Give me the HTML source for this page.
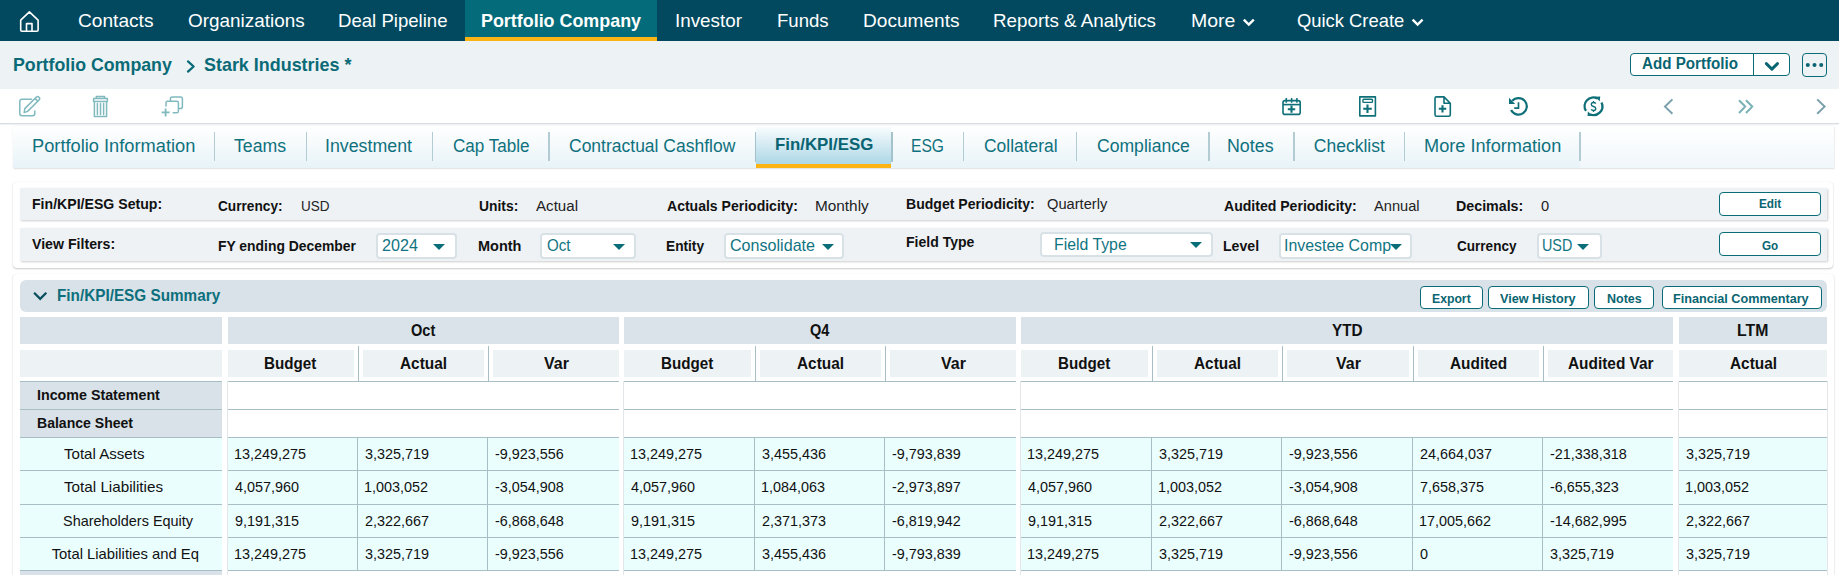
<!DOCTYPE html>
<html><head><meta charset="utf-8"><style>
*{box-sizing:border-box;margin:0;padding:0}
html,body{width:1839px;height:575px;overflow:hidden;background:#fff}
body{position:relative;font-family:"Liberation Sans",sans-serif;color:#111}
.a{position:absolute}
.t{position:absolute;white-space:nowrap;line-height:1;transform-origin:0 0}
.panel{position:absolute;background:#fff;border-radius:4px;box-shadow:0 1px 2px rgba(0,0,0,.2),0 0 1px rgba(0,0,0,.1)}
.row{position:absolute;background:#eef2f5;box-shadow:1px 1px 2px rgba(0,0,0,.2)}
.dd{position:absolute;background:#fff;border:2px solid #d8e2e6;border-radius:4px}
.car{position:absolute;width:0;height:0;border-left:6.5px solid transparent;border-right:6.5px solid transparent;border-top:6.8px solid #0a6e78}
.btn{position:absolute;background:#fff;border:1.4px solid #0b6c77;border-radius:4px}
</style></head><body>
<div class="a" style="left:0;top:0;width:1839px;height:41px;background:#02495f"></div>
<div class="a" style="left:465px;top:0;width:192px;height:41px;background:#036b79"></div>
<div class="a" style="left:465px;top:37px;width:192px;height:4px;background:#fbb414"></div>
<svg class="a" style="left:0;top:0" width="60" height="41" viewBox="0 0 60 41"><path d="M20.7 30 V20.2 L29.4 11.8 L38.1 20.2 V30 Q38.1 31.2 36.9 31.2 H21.9 Q20.7 31.2 20.7 30 Z M26.5 31.2 V23.6 H32 V31.2" fill="none" stroke="#fff" stroke-width="1.6" stroke-linejoin="round"/></svg>
<div class="t" style="left:78.00px;top:10.92px;font-size:19px;font-weight:400;color:#ffffff;transform:scaleX(1.0070);">Contacts</div>
<div class="t" style="left:187.50px;top:10.92px;font-size:19px;font-weight:400;color:#ffffff;transform:scaleX(0.9955);">Organizations</div>
<div class="t" style="left:338.02px;top:10.92px;font-size:19px;font-weight:400;color:#ffffff;transform:scaleX(0.9783);">Deal Pipeline</div>
<div class="t" style="left:675.31px;top:10.92px;font-size:19px;font-weight:400;color:#ffffff;transform:scaleX(0.9902);">Investor</div>
<div class="t" style="left:776.82px;top:10.92px;font-size:19px;font-weight:400;color:#ffffff;transform:scaleX(0.9784);">Funds</div>
<div class="t" style="left:862.60px;top:10.92px;font-size:19px;font-weight:400;color:#ffffff;transform:scaleX(1.0043);">Documents</div>
<div class="t" style="left:993.21px;top:10.92px;font-size:19px;font-weight:400;color:#ffffff;transform:scaleX(0.9891);">Reports &amp; Analytics</div>
<div class="t" style="left:1191.37px;top:10.92px;font-size:19px;font-weight:400;color:#ffffff;transform:scaleX(1.0259);">More</div>
<div class="t" style="left:1297.30px;top:10.92px;font-size:19px;font-weight:400;color:#ffffff;transform:scaleX(0.9673);">Quick Create</div>
<div class="t" style="left:480.66px;top:10.92px;font-size:19px;font-weight:700;color:#ffffff;transform:scaleX(0.9417);">Portfolio Company</div>
<svg class="a" style="left:1230px;top:0" width="200" height="41" viewBox="1230 0 200 41"><g fill="none" stroke="#fff" stroke-width="2.4"><path d="M1243.8 19.6 L1248.8 24.6 L1253.8 19.6"/><path d="M1412.6 19.6 L1417.6 24.6 L1422.6 19.6"/></g></svg>
<div class="a" style="left:0;top:41px;width:1839px;height:48px;background:#edf2f5"></div>
<div class="t" style="left:12.77px;top:54.92px;font-size:19px;font-weight:700;color:#0a6b77;transform:scaleX(0.9346);">Portfolio Company</div>
<div class="t" style="left:204.00px;top:54.92px;font-size:19px;font-weight:700;color:#0a6b77;transform:scaleX(0.9434);">Stark Industries *</div>
<svg class="a" style="left:180px;top:55px" width="20" height="22" viewBox="180 55 20 22"><path d="M188 61.4 L193.6 66.5 L188 71.6" fill="none" stroke="#0a6b77" stroke-width="2.3" stroke-linecap="round" stroke-linejoin="round"/></svg>
<div class="btn" style="left:1630px;top:53px;width:160px;height:23px"></div>
<div class="a" style="left:1752.8px;top:54px;width:1.3px;height:21px;background:#0b6c77"></div>
<div class="btn" style="left:1802px;top:53px;width:25px;height:24px;background:transparent"></div>
<div class="t" style="left:1641.90px;top:56.26px;font-size:16px;font-weight:700;color:#0a6572;transform:scaleX(0.9474);">Add Portfolio</div>
<svg class="a" style="left:1760px;top:55px" width="70" height="20" viewBox="1760 55 70 20"><path d="M1766.3 63.6 L1771.9 69.1 L1777.5 63.6" fill="none" stroke="#0a6572" stroke-width="2.9" stroke-linecap="round" stroke-linejoin="round"/><g fill="#0a6572"><circle cx="1807.8" cy="65" r="2"/><circle cx="1814.5" cy="65" r="2"/><circle cx="1821.2" cy="65" r="2"/></g></svg>
<div class="a" style="left:0;top:122.6px;width:1839px;height:1.2px;background:#dadddf"></div>
<div class="a" style="left:0;top:123.8px;width:1839px;height:1px;background:#f0f1f2"></div>
<svg class="a" style="left:0;top:88px" width="200" height="34" viewBox="0 88 200 34">
<g fill="none" stroke="#80b9be" stroke-width="1.5" stroke-linecap="round" stroke-linejoin="round">
<path d="M31.5 99.2 H22 Q19.8 99.2 19.8 101.4 V113.6 Q19.8 115.8 22 115.8 H32.6 Q34.8 115.8 34.8 113.6 V111"/>
<path d="M24.2 112.6 L24.8 108.6 L36.2 97.2 Q37.6 95.8 39 97.2 Q40.4 98.6 39 100 L27.6 111.4 Z M35 98.4 L37.8 101.2"/>
<path d="M96.3 98.6 V96.6 H104.6 V98.6 M93.6 98.6 H107.4 V101.4 H93.6 Z M94.4 101.4 V116.4 H106.6 V101.4 M97.4 103.6 V114.4 M100.5 103.6 V114.4 M103.6 103.6 V114.4"/>
<path d="M170.4 100.6 V98.8 Q170.4 97 172.2 97 H180.6 Q182.4 97 182.4 98.8 V106.8 Q182.4 108.6 180.6 108.6 H178.8"/>
<path d="M166 106 V102.8 Q166 101.2 167.6 101.2 H176.8 Q178.4 101.2 178.4 102.8 V111.2 Q178.4 112.8 176.8 112.8 H173.2"/>
<path d="M161.6 112.4 H169.6 M165.6 108.4 V116.4" stroke-linecap="butt" stroke-width="1.8"/>
</g></svg>
<svg class="a" style="left:1270px;top:88px" width="569" height="34" viewBox="1270 88 569 34">
<g fill="none" stroke="#0e6f79" stroke-width="1.6" stroke-linejoin="round">
<rect x="1283" y="100.6" width="17.2" height="13.8" rx="2"/>
<path d="M1283 104.6 H1300.2"/>
<path d="M1286.3 98 V102.8 M1291.6 98 V102.8 M1296.9 98 V102.8" stroke-width="1.5"/>
<path d="M1287.8 109.2 H1295.2 M1291.5 105.6 V112.8" stroke-width="2.1"/>
<rect x="1359.8" y="96.9" width="15.6" height="19" />
<rect x="1362.9" y="99.2" width="9.6" height="3.2" rx="1" stroke-width="1.4"/>
<path d="M1363.2 108.8 H1371.8 M1367.5 104.6 V113" stroke-width="2.1"/>
<path d="M1444 96.9 H1436.6 Q1435 96.9 1435 98.5 V114.6 Q1435 116.3 1436.6 116.3 H1448.6 Q1450.3 116.3 1450.3 114.6 V103.2 Z M1444 96.9 V103.2 H1450.3"/>
<path d="M1438.8 108.8 H1446.2 M1442.5 105.2 V112.4" stroke-width="2.1"/>
<path d="M1512.3 100.8 A8.3 8.3 0 1 1 1511.1 110.1" stroke-width="2.2"/>
<path d="M1518.5 102.2 V108.2 H1514.2" stroke-width="1.7"/>
<path d="M1586 110.9 A8.7 8.7 0 0 1 1597.6 98.6" stroke-width="2.3"/>
<path d="M1601.5 102.5 A8.7 8.7 0 0 1 1590 114.2" stroke-width="2.3"/>
<path d="M1595.7 103.6 Q1595.1 102.5 1593.5 102.5 Q1591.3 102.5 1591.3 104.4 Q1591.3 105.9 1593.5 106.5 Q1595.8 107.1 1595.8 108.7 Q1595.8 110.5 1593.5 110.5 Q1591.8 110.5 1591.2 109.4 M1593.5 100.9 V102.5 M1593.5 110.5 V112" stroke-width="1.35"/>
</g>
<g fill="#0e6f79">
<path d="M1509 97.8 L1509 104 L1515.2 104 Z"/>
<path d="M1595 96.8 L1600.2 96.6 L1599.8 101.2 Z"/>
<path d="M1587.6 116 L1587.8 111.4 L1592.6 115.8 Z"/>
</g>
<g fill="none" stroke="#7aa0ab" stroke-width="2">
<path d="M1672.4 99.4 L1665 106.6 L1672.4 113.8"/>
<path d="M1817.2 99.4 L1824.6 106.6 L1817.2 113.8"/>
</g>
<path d="M1739 100.2 L1745.2 106.6 L1739 113 M1746 100.2 L1752.2 106.6 L1746 113" fill="none" stroke="#79b1b7" stroke-width="2"/>
</svg>
<div class="a" style="left:13px;top:126px;width:1821px;height:41.5px;background:linear-gradient(#ffffff 0%,#f8fbfd 50%,#f0f7fa 100%);box-shadow:0.5px 1px 1.5px rgba(0,0,0,.12),0 0 1.5px rgba(0,0,0,.1)"></div>
<div class="a" style="left:13px;top:126px;width:1567px;height:41.5px;background:linear-gradient(#ffffff 0%,#f4f9fb 50%,#e7f3f8 100%)"></div>
<div class="a" style="left:756px;top:127px;width:135px;height:41px;background:linear-gradient(#f8fcfd,#a5d3e4)"></div>
<div class="a" style="left:756px;top:164px;width:135px;height:4px;background:#fbb414"></div>
<div class="a" style="left:755px;top:132px;width:1px;height:30px;background:#a3c2cb"></div>
<div class="a" style="left:891px;top:132px;width:2px;height:30px;background:#a3c2cb"></div>
<div class="a" style="left:213.85px;top:132.4px;width:1.5px;height:29px;background:#b3ccd3"></div>
<div class="a" style="left:305.85px;top:132.4px;width:1.5px;height:29px;background:#b3ccd3"></div>
<div class="a" style="left:431.55px;top:132.4px;width:1.5px;height:29px;background:#b3ccd3"></div>
<div class="a" style="left:548.25px;top:132.4px;width:1.5px;height:29px;background:#b3ccd3"></div>
<div class="a" style="left:962.55px;top:132.4px;width:1.5px;height:29px;background:#b3ccd3"></div>
<div class="a" style="left:1075.75px;top:132.4px;width:1.5px;height:29px;background:#b3ccd3"></div>
<div class="a" style="left:1208.15px;top:132.4px;width:1.5px;height:29px;background:#b3ccd3"></div>
<div class="a" style="left:1293.15px;top:132.4px;width:1.5px;height:29px;background:#b3ccd3"></div>
<div class="a" style="left:1403.95px;top:132.4px;width:1.5px;height:29px;background:#b3ccd3"></div>
<div class="a" style="left:1579.25px;top:132.4px;width:1.5px;height:29px;background:#b3ccd3"></div>
<div class="t" style="left:32.16px;top:138.19px;font-size:17.5px;font-weight:400;color:#0f717e;transform:scaleX(1.0428);">Portfolio Information</div>
<div class="t" style="left:234.40px;top:138.19px;font-size:17.5px;font-weight:400;color:#0f717e;transform:scaleX(1.0117);">Teams</div>
<div class="t" style="left:325.38px;top:138.19px;font-size:17.5px;font-weight:400;color:#0f717e;transform:scaleX(1.0161);">Investment</div>
<div class="t" style="left:452.70px;top:138.19px;font-size:17.5px;font-weight:400;color:#0f717e;transform:scaleX(0.9761);">Cap Table</div>
<div class="t" style="left:569.00px;top:138.19px;font-size:17.5px;font-weight:400;color:#0f717e;">Contractual Cashflow</div>
<div class="t" style="left:911.31px;top:138.19px;font-size:17.5px;font-weight:400;color:#0f717e;transform:scaleX(0.8912);">ESG</div>
<div class="t" style="left:983.50px;top:138.19px;font-size:17.5px;font-weight:400;color:#0f717e;transform:scaleX(0.9968);">Collateral</div>
<div class="t" style="left:1096.60px;top:138.19px;font-size:17.5px;font-weight:400;color:#0f717e;transform:scaleX(1.0047);">Compliance</div>
<div class="t" style="left:1227.48px;top:138.19px;font-size:17.5px;font-weight:400;color:#0f717e;transform:scaleX(1.0186);">Notes</div>
<div class="t" style="left:1313.80px;top:138.19px;font-size:17.5px;font-weight:400;color:#0f717e;">Checklist</div>
<div class="t" style="left:1423.96px;top:138.19px;font-size:17.5px;font-weight:400;color:#0f717e;transform:scaleX(1.0380);">More Information</div>
<div class="t" style="left:774.58px;top:136.43px;font-size:16.5px;font-weight:700;color:#0a6371;transform:scaleX(1.0209);">Fin/KPI/ESG</div>
<div class="panel" style="left:13px;top:182px;width:1820px;height:85.5px"></div>
<div class="row" style="left:20px;top:188px;width:1807px;height:32px"></div>
<div class="row" style="left:20px;top:228px;width:1807px;height:33px"></div>
<div class="t" style="left:31.69px;top:196.28px;font-size:15.5px;font-weight:700;color:#111;transform:scaleX(0.9106);">Fin/KPI/ESG Setup:</div>
<div class="t" style="left:218.40px;top:197.98px;font-size:15.5px;font-weight:700;color:#111;transform:scaleX(0.8813);">Currency:</div>
<div class="t" style="left:300.53px;top:197.98px;font-size:15.5px;font-weight:400;color:#222;transform:scaleX(0.8721);">USD</div>
<div class="t" style="left:478.70px;top:197.98px;font-size:15.5px;font-weight:700;color:#111;transform:scaleX(0.8936);">Units:</div>
<div class="t" style="left:536.10px;top:197.98px;font-size:15.5px;font-weight:400;color:#222;transform:scaleX(0.9757);">Actual</div>
<div class="t" style="left:666.70px;top:197.98px;font-size:15.5px;font-weight:700;color:#111;transform:scaleX(0.9049);">Actuals Periodicity:</div>
<div class="t" style="left:814.61px;top:197.98px;font-size:15.5px;font-weight:400;color:#222;transform:scaleX(0.9902);">Monthly</div>
<div class="t" style="left:906.09px;top:196.28px;font-size:15.5px;font-weight:700;color:#111;transform:scaleX(0.9061);">Budget Periodicity:</div>
<div class="t" style="left:1047.40px;top:196.28px;font-size:15.5px;font-weight:400;color:#222;transform:scaleX(0.9454);">Quarterly</div>
<div class="t" style="left:1223.70px;top:197.98px;font-size:15.5px;font-weight:700;color:#111;transform:scaleX(0.9068);">Audited Periodicity:</div>
<div class="t" style="left:1374.00px;top:197.98px;font-size:15.5px;font-weight:400;color:#222;transform:scaleX(0.9431);">Annual</div>
<div class="t" style="left:1456.08px;top:197.98px;font-size:15.5px;font-weight:700;color:#111;transform:scaleX(0.9188);">Decimals:</div>
<div class="t" style="left:1541.00px;top:197.98px;font-size:15.5px;font-weight:400;color:#222;transform:scaleX(0.9444);">0</div>
<div class="btn" style="left:1719px;top:192.2px;width:102px;height:23.5px"></div>
<div class="t" style="left:1758.90px;top:198.44px;font-size:12px;font-weight:700;color:#0a6572;transform:scaleX(0.9838);">Edit</div>
<div class="btn" style="left:1719px;top:232.4px;width:102px;height:24.1px"></div>
<div class="t" style="left:1762.10px;top:239.64px;font-size:12px;font-weight:700;color:#0a6572;transform:scaleX(0.9734);">Go</div>
<div class="t" style="left:31.80px;top:236.28px;font-size:15.5px;font-weight:700;color:#111;transform:scaleX(0.9136);">View Filters:</div>
<div class="t" style="left:217.50px;top:237.98px;font-size:15.5px;font-weight:700;color:#111;transform:scaleX(0.8965);">FY ending December</div>
<div class="t" style="left:477.76px;top:237.98px;font-size:15.5px;font-weight:700;color:#111;transform:scaleX(0.9354);">Month</div>
<div class="t" style="left:665.82px;top:237.98px;font-size:15.5px;font-weight:700;color:#111;transform:scaleX(0.8837);">Entity</div>
<div class="t" style="left:906.09px;top:234.38px;font-size:15.5px;font-weight:700;color:#111;transform:scaleX(0.9054);">Field Type</div>
<div class="t" style="left:1222.79px;top:237.98px;font-size:15.5px;font-weight:700;color:#111;transform:scaleX(0.9105);">Level</div>
<div class="t" style="left:1457.00px;top:237.98px;font-size:15.5px;font-weight:700;color:#111;transform:scaleX(0.8738);">Currency</div>
<div class="dd" style="left:375.5px;top:233.2px;width:81.1px;height:26.2px"></div>
<div class="t" style="left:381.50px;top:236.92px;font-size:16.4px;font-weight:400;color:#117482;transform:scaleX(0.9849);">2024</div>
<div class="car" style="left:432.5px;top:243.6px"></div>
<div class="dd" style="left:540.4px;top:233.3px;width:96.0px;height:26.1px"></div>
<div class="t" style="left:547.00px;top:237.02px;font-size:16.4px;font-weight:400;color:#117482;transform:scaleX(0.9212);">Oct</div>
<div class="car" style="left:612.5px;top:243.7px"></div>
<div class="dd" style="left:723.7px;top:233.3px;width:120.3px;height:25.9px"></div>
<div class="t" style="left:730.20px;top:236.92px;font-size:16.4px;font-weight:400;color:#117482;transform:scaleX(0.9821);">Consolidate</div>
<div class="car" style="left:821.5px;top:243.6px"></div>
<div class="dd" style="left:1039.7px;top:231.7px;width:173.3px;height:25.6px"></div>
<div class="t" style="left:1053.83px;top:236.12px;font-size:16.4px;font-weight:400;color:#117482;transform:scaleX(0.9651);">Field Type</div>
<div class="car" style="left:1190px;top:241.8px"></div>
<div class="dd" style="left:1279px;top:233.3px;width:132.9px;height:25.7px"></div>
<div class="t" style="left:1283.73px;top:237.22px;font-size:16.4px;font-weight:400;color:#117482;transform:scaleX(0.9714);">Investee Comp</div>
<div class="car" style="left:1390.2px;top:243.5px"></div>
<div class="dd" style="left:1536.5px;top:233.3px;width:65.1px;height:26.0px"></div>
<div class="t" style="left:1541.82px;top:236.92px;font-size:16.4px;font-weight:400;color:#117482;transform:scaleX(0.8765);">USD</div>
<div class="car" style="left:1577.3px;top:243.6px"></div>
<div class="panel" style="left:13px;top:274px;width:1821px;height:330px"></div>
<div class="a" style="left:20px;top:280.2px;width:1807px;height:31.5px;background:#d8e2e8;border-radius:6px"></div>
<svg class="a" style="left:28px;top:285px" width="24" height="20" viewBox="28 285 24 20"><path d="M34.1 292.8 L40.2 298.9 L46.3 292.8" fill="none" stroke="#0b4f5e" stroke-width="2.3"/></svg>
<div class="t" style="left:56.67px;top:286.93px;font-size:16.5px;font-weight:700;color:#0e6f7c;transform:scaleX(0.9268);">Fin/KPI/ESG Summary</div>
<div class="btn" style="left:1420.2px;top:286.1px;width:62.5px;height:22.7px"></div>
<div class="t" style="left:1432.00px;top:292.64px;font-size:12px;font-weight:700;color:#0a6572;transform:scaleX(1.0182);">Export</div>
<div class="btn" style="left:1488.4px;top:286.1px;width:100.3px;height:22.7px"></div>
<div class="t" style="left:1500.40px;top:292.64px;font-size:12px;font-weight:700;color:#0a6572;transform:scaleX(1.0536);">View History</div>
<div class="btn" style="left:1594.2px;top:286.1px;width:60.3px;height:22.7px"></div>
<div class="t" style="left:1607.00px;top:292.64px;font-size:12px;font-weight:700;color:#0a6572;transform:scaleX(1.0396);">Notes</div>
<div class="btn" style="left:1661.9px;top:286.1px;width:160.1px;height:22.7px"></div>
<div class="t" style="left:1673.40px;top:292.64px;font-size:12px;font-weight:700;color:#0a6572;transform:scaleX(1.0540);">Financial Commentary</div>
<div class="a" style="left:20px;top:317px;width:202px;height:27px;background:#d9e3e9"></div>
<div class="a" style="left:20px;top:350px;width:202px;height:27px;background:#edf2f4"></div>
<div class="a" style="left:20px;top:381px;width:202px;height:56px;background:#d8e2e8"></div>
<div class="a" style="left:20px;top:437px;width:202px;height:133px;background:#ebfefe"></div>
<div class="a" style="left:20px;top:571px;width:202px;height:10px;background:#d8e2e8"></div>
<div class="t" style="left:37.15px;top:387.40px;font-size:15px;font-weight:700;color:#111;transform:scaleX(0.9508);">Income Statement</div>
<div class="t" style="left:37.16px;top:415.10px;font-size:15px;font-weight:700;color:#111;transform:scaleX(0.9365);">Balance Sheet</div>
<div class="t" style="left:63.50px;top:447.47px;font-size:14.8px;font-weight:400;color:#111;transform:scaleX(1.0192);">Total Assets</div>
<div class="t" style="left:63.50px;top:480.47px;font-size:14.8px;font-weight:400;color:#111;transform:scaleX(1.0289);">Total Liabilities</div>
<div class="t" style="left:63.20px;top:514.07px;font-size:14.8px;font-weight:400;color:#111;transform:scaleX(0.9757);">Shareholders Equity</div>
<div class="t" style="left:51.70px;top:547.47px;font-size:14.8px;font-weight:400;color:#111;">Total Liabilities and Eq</div>
<div class="a" style="left:20px;top:381px;width:202px;height:1px;background:#a8bec5"></div>
<div class="a" style="left:20px;top:409px;width:202px;height:1px;background:#a8bec5"></div>
<div class="a" style="left:20px;top:437px;width:202px;height:1px;background:#a8bec5"></div>
<div class="a" style="left:20px;top:470px;width:202px;height:1px;background:#a8bec5"></div>
<div class="a" style="left:20px;top:504px;width:202px;height:1px;background:#a8bec5"></div>
<div class="a" style="left:20px;top:537px;width:202px;height:1px;background:#a8bec5"></div>
<div class="a" style="left:20px;top:570px;width:202px;height:1px;background:#a8bec5"></div>
<div class="a" style="left:228px;top:317px;width:391px;height:27px;background:#d9e3e9"></div>
<div class="a" style="left:227px;top:381px;width:392px;height:200px;background:#fff;border-left:1px solid #e3e7e9;"></div>
<div class="a" style="left:228px;top:437px;width:391px;height:133px;background:#ebfefe"></div>
<div class="a" style="left:228.0px;top:350px;width:126.0px;height:27px;background:#edf2f4"></div>
<div class="t" style="left:264.04px;top:355.67px;font-size:15.75px;font-weight:700;color:#111;transform:scaleX(0.9630);">Budget</div>
<div class="a" style="left:363.0px;top:350px;width:121.0px;height:27px;background:#edf2f4"></div>
<div class="t" style="left:400.20px;top:355.67px;font-size:15.75px;font-weight:700;color:#111;transform:scaleX(0.9757);">Actual</div>
<div class="a" style="left:493.0px;top:350px;width:126.0px;height:27px;background:#edf2f4"></div>
<div class="t" style="left:543.65px;top:355.67px;font-size:15.75px;font-weight:700;color:#111;transform:scaleX(1.0125);">Var</div>
<div class="t" style="left:411.00px;top:322.57px;font-size:15.75px;font-weight:700;color:#111;transform:scaleX(0.9256);">Oct</div>
<div class="a" style="left:358px;top:346px;width:1px;height:35px;background:#a8bec5"></div>
<div class="a" style="left:357px;top:437px;width:1px;height:133px;background:#a8bec5"></div>
<div class="a" style="left:488px;top:346px;width:1px;height:35px;background:#a8bec5"></div>
<div class="a" style="left:487px;top:437px;width:1px;height:133px;background:#a8bec5"></div>
<div class="t" style="left:233.83px;top:447.47px;font-size:14.8px;font-weight:400;color:#111;transform:scaleX(0.9725);">13,249,275</div>
<div class="t" style="left:234.80px;top:480.47px;font-size:14.8px;font-weight:400;color:#111;transform:scaleX(0.9725);">4,057,960</div>
<div class="t" style="left:234.80px;top:514.07px;font-size:14.8px;font-weight:400;color:#111;transform:scaleX(0.9725);">9,191,315</div>
<div class="t" style="left:233.83px;top:547.47px;font-size:14.8px;font-weight:400;color:#111;transform:scaleX(0.9725);">13,249,275</div>
<div class="t" style="left:364.80px;top:447.47px;font-size:14.8px;font-weight:400;color:#111;transform:scaleX(0.9725);">3,325,719</div>
<div class="t" style="left:363.83px;top:480.47px;font-size:14.8px;font-weight:400;color:#111;transform:scaleX(0.9725);">1,003,052</div>
<div class="t" style="left:364.80px;top:514.07px;font-size:14.8px;font-weight:400;color:#111;transform:scaleX(0.9725);">2,322,667</div>
<div class="t" style="left:364.80px;top:547.47px;font-size:14.8px;font-weight:400;color:#111;transform:scaleX(0.9725);">3,325,719</div>
<div class="t" style="left:494.80px;top:447.47px;font-size:14.8px;font-weight:400;color:#111;transform:scaleX(0.9725);">-9,923,556</div>
<div class="t" style="left:494.80px;top:480.47px;font-size:14.8px;font-weight:400;color:#111;transform:scaleX(0.9725);">-3,054,908</div>
<div class="t" style="left:494.80px;top:514.07px;font-size:14.8px;font-weight:400;color:#111;transform:scaleX(0.9725);">-6,868,648</div>
<div class="t" style="left:494.80px;top:547.47px;font-size:14.8px;font-weight:400;color:#111;transform:scaleX(0.9725);">-9,923,556</div>
<div class="a" style="left:228px;top:381px;width:391px;height:1px;background:#a8bec5"></div>
<div class="a" style="left:228px;top:409px;width:391px;height:1px;background:#a8bec5"></div>
<div class="a" style="left:228px;top:437px;width:391px;height:1px;background:#a8bec5"></div>
<div class="a" style="left:228px;top:470px;width:391px;height:1px;background:#a8bec5"></div>
<div class="a" style="left:228px;top:504px;width:391px;height:1px;background:#a8bec5"></div>
<div class="a" style="left:228px;top:537px;width:391px;height:1px;background:#a8bec5"></div>
<div class="a" style="left:228px;top:570px;width:391px;height:1px;background:#a8bec5"></div>
<div class="a" style="left:624px;top:317px;width:392px;height:27px;background:#d9e3e9"></div>
<div class="a" style="left:623px;top:381px;width:393px;height:200px;background:#fff;border-left:1px solid #e3e7e9;"></div>
<div class="a" style="left:624px;top:437px;width:392px;height:133px;background:#ebfefe"></div>
<div class="a" style="left:624.0px;top:350px;width:127.0px;height:27px;background:#edf2f4"></div>
<div class="t" style="left:660.54px;top:355.67px;font-size:15.75px;font-weight:700;color:#111;transform:scaleX(0.9630);">Budget</div>
<div class="a" style="left:760.0px;top:350px;width:121.0px;height:27px;background:#edf2f4"></div>
<div class="t" style="left:797.20px;top:355.67px;font-size:15.75px;font-weight:700;color:#111;transform:scaleX(0.9757);">Actual</div>
<div class="a" style="left:890.0px;top:350px;width:126.0px;height:27px;background:#edf2f4"></div>
<div class="t" style="left:940.65px;top:355.67px;font-size:15.75px;font-weight:700;color:#111;transform:scaleX(1.0125);">Var</div>
<div class="t" style="left:810.20px;top:322.57px;font-size:15.75px;font-weight:700;color:#111;transform:scaleX(0.9223);">Q4</div>
<div class="a" style="left:755px;top:346px;width:1px;height:35px;background:#a8bec5"></div>
<div class="a" style="left:754px;top:437px;width:1px;height:133px;background:#a8bec5"></div>
<div class="a" style="left:885px;top:346px;width:1px;height:35px;background:#a8bec5"></div>
<div class="a" style="left:884px;top:437px;width:1px;height:133px;background:#a8bec5"></div>
<div class="t" style="left:629.83px;top:447.47px;font-size:14.8px;font-weight:400;color:#111;transform:scaleX(0.9725);">13,249,275</div>
<div class="t" style="left:630.80px;top:480.47px;font-size:14.8px;font-weight:400;color:#111;transform:scaleX(0.9725);">4,057,960</div>
<div class="t" style="left:630.80px;top:514.07px;font-size:14.8px;font-weight:400;color:#111;transform:scaleX(0.9725);">9,191,315</div>
<div class="t" style="left:629.83px;top:547.47px;font-size:14.8px;font-weight:400;color:#111;transform:scaleX(0.9725);">13,249,275</div>
<div class="t" style="left:761.80px;top:447.47px;font-size:14.8px;font-weight:400;color:#111;transform:scaleX(0.9725);">3,455,436</div>
<div class="t" style="left:760.83px;top:480.47px;font-size:14.8px;font-weight:400;color:#111;transform:scaleX(0.9725);">1,084,063</div>
<div class="t" style="left:761.80px;top:514.07px;font-size:14.8px;font-weight:400;color:#111;transform:scaleX(0.9725);">2,371,373</div>
<div class="t" style="left:761.80px;top:547.47px;font-size:14.8px;font-weight:400;color:#111;transform:scaleX(0.9725);">3,455,436</div>
<div class="t" style="left:891.80px;top:447.47px;font-size:14.8px;font-weight:400;color:#111;transform:scaleX(0.9725);">-9,793,839</div>
<div class="t" style="left:891.80px;top:480.47px;font-size:14.8px;font-weight:400;color:#111;transform:scaleX(0.9725);">-2,973,897</div>
<div class="t" style="left:891.80px;top:514.07px;font-size:14.8px;font-weight:400;color:#111;transform:scaleX(0.9725);">-6,819,942</div>
<div class="t" style="left:891.80px;top:547.47px;font-size:14.8px;font-weight:400;color:#111;transform:scaleX(0.9725);">-9,793,839</div>
<div class="a" style="left:624px;top:381px;width:392px;height:1px;background:#a8bec5"></div>
<div class="a" style="left:624px;top:409px;width:392px;height:1px;background:#a8bec5"></div>
<div class="a" style="left:624px;top:437px;width:392px;height:1px;background:#a8bec5"></div>
<div class="a" style="left:624px;top:470px;width:392px;height:1px;background:#a8bec5"></div>
<div class="a" style="left:624px;top:504px;width:392px;height:1px;background:#a8bec5"></div>
<div class="a" style="left:624px;top:537px;width:392px;height:1px;background:#a8bec5"></div>
<div class="a" style="left:624px;top:570px;width:392px;height:1px;background:#a8bec5"></div>
<div class="a" style="left:1021px;top:317px;width:652px;height:27px;background:#d9e3e9"></div>
<div class="a" style="left:1020px;top:381px;width:653px;height:200px;background:#fff;border-left:1px solid #e3e7e9;"></div>
<div class="a" style="left:1021px;top:437px;width:652px;height:133px;background:#ebfefe"></div>
<div class="a" style="left:1021.0px;top:350px;width:127.0px;height:27px;background:#edf2f4"></div>
<div class="t" style="left:1057.54px;top:355.67px;font-size:15.75px;font-weight:700;color:#111;transform:scaleX(0.9630);">Budget</div>
<div class="a" style="left:1157.0px;top:350px;width:121.0px;height:27px;background:#edf2f4"></div>
<div class="t" style="left:1194.20px;top:355.67px;font-size:15.75px;font-weight:700;color:#111;transform:scaleX(0.9757);">Actual</div>
<div class="a" style="left:1287.0px;top:350px;width:122.0px;height:27px;background:#edf2f4"></div>
<div class="t" style="left:1335.65px;top:355.67px;font-size:15.75px;font-weight:700;color:#111;transform:scaleX(1.0125);">Var</div>
<div class="a" style="left:1418.0px;top:350px;width:121.0px;height:27px;background:#edf2f4"></div>
<div class="t" style="left:1450.20px;top:355.67px;font-size:15.75px;font-weight:700;color:#111;transform:scaleX(0.9759);">Audited</div>
<div class="a" style="left:1548.0px;top:350px;width:125.0px;height:27px;background:#edf2f4"></div>
<div class="t" style="left:1567.80px;top:355.67px;font-size:15.75px;font-weight:700;color:#111;transform:scaleX(0.9773);">Audited Var</div>
<div class="t" style="left:1331.90px;top:322.57px;font-size:15.75px;font-weight:700;color:#111;transform:scaleX(0.9703);">YTD</div>
<div class="a" style="left:1152px;top:346px;width:1px;height:35px;background:#a8bec5"></div>
<div class="a" style="left:1151px;top:437px;width:1px;height:133px;background:#a8bec5"></div>
<div class="a" style="left:1282px;top:346px;width:1px;height:35px;background:#a8bec5"></div>
<div class="a" style="left:1281px;top:437px;width:1px;height:133px;background:#a8bec5"></div>
<div class="a" style="left:1413px;top:346px;width:1px;height:35px;background:#a8bec5"></div>
<div class="a" style="left:1412px;top:437px;width:1px;height:133px;background:#a8bec5"></div>
<div class="a" style="left:1543px;top:346px;width:1px;height:35px;background:#a8bec5"></div>
<div class="a" style="left:1542px;top:437px;width:1px;height:133px;background:#a8bec5"></div>
<div class="t" style="left:1026.83px;top:447.47px;font-size:14.8px;font-weight:400;color:#111;transform:scaleX(0.9725);">13,249,275</div>
<div class="t" style="left:1027.80px;top:480.47px;font-size:14.8px;font-weight:400;color:#111;transform:scaleX(0.9725);">4,057,960</div>
<div class="t" style="left:1027.80px;top:514.07px;font-size:14.8px;font-weight:400;color:#111;transform:scaleX(0.9725);">9,191,315</div>
<div class="t" style="left:1026.83px;top:547.47px;font-size:14.8px;font-weight:400;color:#111;transform:scaleX(0.9725);">13,249,275</div>
<div class="t" style="left:1158.80px;top:447.47px;font-size:14.8px;font-weight:400;color:#111;transform:scaleX(0.9725);">3,325,719</div>
<div class="t" style="left:1157.83px;top:480.47px;font-size:14.8px;font-weight:400;color:#111;transform:scaleX(0.9725);">1,003,052</div>
<div class="t" style="left:1158.80px;top:514.07px;font-size:14.8px;font-weight:400;color:#111;transform:scaleX(0.9725);">2,322,667</div>
<div class="t" style="left:1158.80px;top:547.47px;font-size:14.8px;font-weight:400;color:#111;transform:scaleX(0.9725);">3,325,719</div>
<div class="t" style="left:1288.80px;top:447.47px;font-size:14.8px;font-weight:400;color:#111;transform:scaleX(0.9725);">-9,923,556</div>
<div class="t" style="left:1288.80px;top:480.47px;font-size:14.8px;font-weight:400;color:#111;transform:scaleX(0.9725);">-3,054,908</div>
<div class="t" style="left:1288.80px;top:514.07px;font-size:14.8px;font-weight:400;color:#111;transform:scaleX(0.9725);">-6,868,648</div>
<div class="t" style="left:1288.80px;top:547.47px;font-size:14.8px;font-weight:400;color:#111;transform:scaleX(0.9725);">-9,923,556</div>
<div class="t" style="left:1419.80px;top:447.47px;font-size:14.8px;font-weight:400;color:#111;transform:scaleX(0.9725);">24,664,037</div>
<div class="t" style="left:1419.80px;top:480.47px;font-size:14.8px;font-weight:400;color:#111;transform:scaleX(0.9725);">7,658,375</div>
<div class="t" style="left:1418.83px;top:514.07px;font-size:14.8px;font-weight:400;color:#111;transform:scaleX(0.9725);">17,005,662</div>
<div class="t" style="left:1419.80px;top:547.47px;font-size:14.8px;font-weight:400;color:#111;transform:scaleX(0.9725);">0</div>
<div class="t" style="left:1549.80px;top:447.47px;font-size:14.8px;font-weight:400;color:#111;transform:scaleX(0.9725);">-21,338,318</div>
<div class="t" style="left:1549.80px;top:480.47px;font-size:14.8px;font-weight:400;color:#111;transform:scaleX(0.9725);">-6,655,323</div>
<div class="t" style="left:1549.80px;top:514.07px;font-size:14.8px;font-weight:400;color:#111;transform:scaleX(0.9725);">-14,682,995</div>
<div class="t" style="left:1549.80px;top:547.47px;font-size:14.8px;font-weight:400;color:#111;transform:scaleX(0.9725);">3,325,719</div>
<div class="a" style="left:1021px;top:381px;width:652px;height:1px;background:#a8bec5"></div>
<div class="a" style="left:1021px;top:409px;width:652px;height:1px;background:#a8bec5"></div>
<div class="a" style="left:1021px;top:437px;width:652px;height:1px;background:#a8bec5"></div>
<div class="a" style="left:1021px;top:470px;width:652px;height:1px;background:#a8bec5"></div>
<div class="a" style="left:1021px;top:504px;width:652px;height:1px;background:#a8bec5"></div>
<div class="a" style="left:1021px;top:537px;width:652px;height:1px;background:#a8bec5"></div>
<div class="a" style="left:1021px;top:570px;width:652px;height:1px;background:#a8bec5"></div>
<div class="a" style="left:1679px;top:317px;width:148px;height:27px;background:#d9e3e9"></div>
<div class="a" style="left:1678px;top:381px;width:150px;height:200px;background:#fff;border-left:1px solid #e3e7e9;border-right:1px solid #e3e7e9"></div>
<div class="a" style="left:1679px;top:437px;width:148px;height:133px;background:#ebfefe"></div>
<div class="a" style="left:1679.0px;top:350px;width:148.0px;height:27px;background:#edf2f4"></div>
<div class="t" style="left:1729.70px;top:355.67px;font-size:15.75px;font-weight:700;color:#111;transform:scaleX(0.9757);">Actual</div>
<div class="t" style="left:1736.90px;top:322.57px;font-size:15.75px;font-weight:700;color:#111;transform:scaleX(1.0042);">LTM</div>
<div class="t" style="left:1685.80px;top:447.47px;font-size:14.8px;font-weight:400;color:#111;transform:scaleX(0.9725);">3,325,719</div>
<div class="t" style="left:1684.83px;top:480.47px;font-size:14.8px;font-weight:400;color:#111;transform:scaleX(0.9725);">1,003,052</div>
<div class="t" style="left:1685.80px;top:514.07px;font-size:14.8px;font-weight:400;color:#111;transform:scaleX(0.9725);">2,322,667</div>
<div class="t" style="left:1685.80px;top:547.47px;font-size:14.8px;font-weight:400;color:#111;transform:scaleX(0.9725);">3,325,719</div>
<div class="a" style="left:1679px;top:381px;width:148px;height:1px;background:#a8bec5"></div>
<div class="a" style="left:1679px;top:409px;width:148px;height:1px;background:#a8bec5"></div>
<div class="a" style="left:1679px;top:437px;width:148px;height:1px;background:#a8bec5"></div>
<div class="a" style="left:1679px;top:470px;width:148px;height:1px;background:#a8bec5"></div>
<div class="a" style="left:1679px;top:504px;width:148px;height:1px;background:#a8bec5"></div>
<div class="a" style="left:1679px;top:537px;width:148px;height:1px;background:#a8bec5"></div>
<div class="a" style="left:1679px;top:570px;width:148px;height:1px;background:#a8bec5"></div>
</body></html>
